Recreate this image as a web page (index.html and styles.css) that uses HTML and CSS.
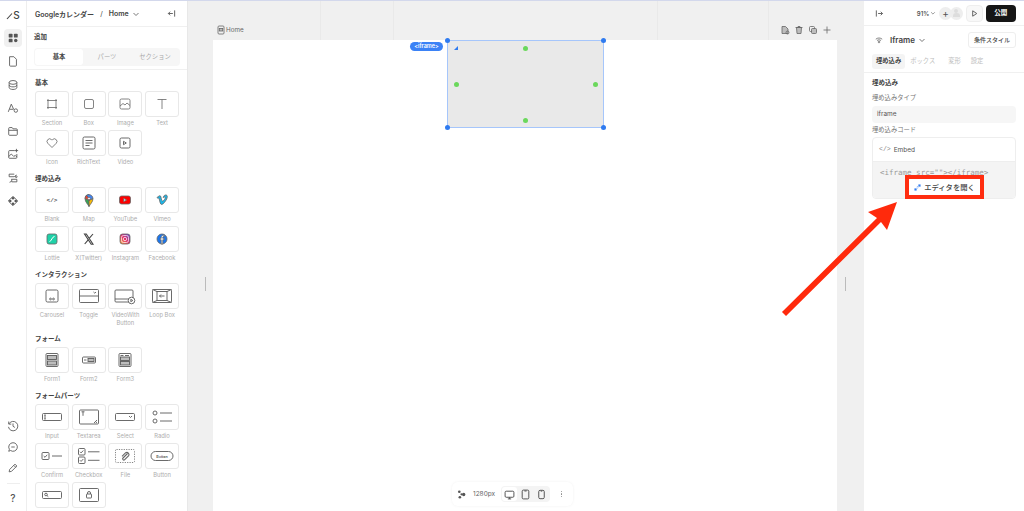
FILE: index.html
```html
<!DOCTYPE html>
<html lang="ja">
<head>
<meta charset="utf-8">
<title>Studio Editor</title>
<link rel="stylesheet" href="styles.css">
</head>
<body>
<div class="app">
  <nav class="rail">
    <div class="rail-logo"><svg class="logo" viewBox="0 0 7 10"><path d="M1 9 L6 3.500" class="bold"/></svg><span class="logo-s">S</span></div>
    <div class="rail-item active"><svg class="ri" viewBox="0 0 14 14"><g class="solid"><rect x="2" y="2" width="4.500" height="4.500" rx="1"/><rect x="8" y="2" width="4.500" height="4.500" rx="1"/><rect x="2" y="8" width="4.500" height="4" rx="1"/><circle cx="10.200" cy="10" r="2"/></g></svg></div>
    <div class="rail-item"><svg class="ri" viewBox="0 0 14 14"><path d="M3 2h5l3 3v7a1 1 0 0 1-1 1H4a1 1 0 0 1-1-1z"/></svg></div>
    <div class="rail-item"><svg class="ri" viewBox="0 0 14 14"><ellipse cx="7" cy="4" rx="4.500" ry="2.200"/><path d="M2.500 4v6c0 1.200 2 2.200 4.500 2.200s4.500-1 4.500-2.200V4M2.500 7c0 1.200 2 2.200 4.500 2.200s4.500-1 4.500-2.200"/></svg></div>
    <div class="rail-item"><svg class="ri" viewBox="0 0 14 14"><path d="M1.500 11.500 L5 2.500 L8 9M3 8.500h4"/><circle cx="10.300" cy="10" r="2"/></svg></div>
    <div class="rail-item"><svg class="ri" viewBox="0 0 14 14"><path d="M2 4a1 1 0 0 1 1-1h3l1 1.500h4a1 1 0 0 1 1 1V11a1 1 0 0 1-1 1H3a1 1 0 0 1-1-1zM2 6.200h10"/></svg></div>
    <div class="rail-item"><svg class="ri" viewBox="0 0 14 14"><path d="M9 3H3a1 1 0 0 0-1 1v7a1 1 0 0 0 1 1h7.500a1 1 0 0 0 1-1V7M2 10l3-3 3 3 1.500-1.500 2 2M11 1v4M9 3h4"/></svg></div>
    <div class="rail-item"><svg class="ri" viewBox="0 0 14 14"><path d="M2.500 2.500h6M2.500 2.500v3h6M8.500 5.500 11 3.500M5 8.500h6.500M11.500 8.500v3h-6M5.500 11.500v-3M3 12l2-1"/><circle cx="10.800" cy="5.500" r="1"/></svg></div>
    <div class="rail-item"><svg class="ri" viewBox="0 0 14 14"><path d="M7 1.500 12.500 7 7 12.500 1.500 7z"/><g class="solid"><circle cx="7" cy="3.800" r="1.500"/><circle cx="7" cy="10.200" r="1.500"/><circle cx="3.800" cy="7" r="1.500"/><circle cx="10.200" cy="7" r="1.500"/></g></svg></div>
    <div class="rail-spacer"></div>
    <div class="rail-low"><svg class="ri" viewBox="0 0 14 14"><path d="M2.300 4.500A5.500 5.500 0 1 1 1.700 8M2 1.800v3h3M7 4v3.300l2.200 1.400"/></svg></div>
    <div class="rail-low"><svg class="ri" viewBox="0 0 14 14"><path d="M7 2a5 5 0 1 1-2.800 9.100L2 12l.8-2.300A5 5 0 0 1 7 2zM5 7h4"/></svg></div>
    <div class="rail-low"><svg class="ri" viewBox="0 0 14 14"><path d="M2.500 11.500l.6-2.800L9.300 2.500l2.200 2.200L5.300 10.900zM8 4l2.200 2.200"/></svg></div>
    <div class="rail-rule"></div>
    <div class="rail-help">?</div>
  </nav>

  <aside class="left">
    <header class="left-head">
      <span class="crumb">Googleカレンダー</span><span class="crumb-sep">/</span><span class="crumb">Home</span>
      <svg class="chev" viewBox="0 0 8 8"><path d="M1.500 3l2.500 2.500L6.500 3"/></svg>
      <svg class="collapse" viewBox="0 0 10 10"><path d="M8.500 1.500v7M6.500 5H1.500M3.500 3 1.500 5l2 2"/></svg>
    </header>
    <section class="add">
      <h2 class="add-title">追加</h2>
      <div class="seg"><span class="seg-item on">基本</span><span class="seg-item">パーツ</span><span class="seg-item">セクション</span></div>
    </section>
    <div class="lib">
      <h3 class="lib-title">基本</h3>
      <div class="grid">
        <div class="cell"><div class="tile"><svg class="ti" viewBox="0 0 24 18"><path d="M8 4v10M16 4v10M7 5.500h10M7 12.500h10"/></svg></div><span class="lab">Section</span></div>
        <div class="cell"><div class="tile"><svg class="ti" viewBox="0 0 24 18"><rect x="7.500" y="4.500" width="9" height="9" rx="1.500"/></svg></div><span class="lab">Box</span></div>
        <div class="cell"><div class="tile"><svg class="ti" viewBox="0 0 24 18"><rect x="7" y="4" width="10" height="10" rx="1.500"/><path d="M7 11l3-2.500 2 1.500 2-2 3 2.500"/></svg></div><span class="lab">Image</span></div>
        <div class="cell"><div class="tile"><svg class="ti" viewBox="0 0 24 18"><path d="M7.500 4.500h9M12 4.500V14"/></svg></div><span class="lab">Text</span></div>
        <div class="cell"><div class="tile"><svg class="ti" viewBox="0 0 24 18"><path d="M12 13.500 7.800 9.300a2.600 2.600 0 0 1 3.700-3.700l.5.500.5-.5a2.600 2.600 0 0 1 3.700 3.700z"/></svg></div><span class="lab">Icon</span></div>
        <div class="cell"><div class="tile"><svg class="ti strong" viewBox="0 0 24 18"><rect x="6" y="3" width="12" height="12" rx="1.500"/><path d="M8.500 6.500h7M8.500 9h7M8.500 11.500h4"/></svg></div><span class="lab">RichText</span></div>
        <div class="cell"><div class="tile"><svg class="ti strong" viewBox="0 0 24 18"><rect x="7" y="4" width="10" height="10" rx="1.500"/><path d="M10.500 7.300v3.400l2.800-1.700z"/></svg></div><span class="lab">Video</span></div>
      </div>

      <h3 class="lib-title">埋め込み</h3>
      <div class="grid">
        <div class="cell"><div class="tile"><span class="code-mark">&lt;/&gt;</span></div><span class="lab">Blank</span></div>
        <div class="cell"><div class="tile"><svg class="ti brand" viewBox="0 0 24 18"><path d="M12 15.500c-1-2.200-4-4.500-4-8a4 4 0 0 1 4-4z" fill="#34a853"/><path d="M12 15.500c1-2.200 4-4.500 4-8l-4 2z" fill="#fbbc04"/><path d="M8 7.500a4 4 0 0 1 1.500-3l4 4-1.500 1z" fill="#ea4335"/><path d="M9.500 4.500A4 4 0 0 1 16 7.500l-2.500 1z" fill="#4285f4"/><circle cx="12" cy="7.500" r="1.300" fill="#fff"/></svg></div><span class="lab">Map</span></div>
        <div class="cell"><div class="tile"><svg class="ti brand" viewBox="0 0 24 18"><rect x="6.500" y="5" width="11" height="8" rx="2" fill="#f00"/><path d="M10.800 7.300v3.400l2.800-1.700z" fill="#fff"/></svg></div><span class="lab">YouTube</span></div>
        <div class="cell"><div class="tile"><svg class="ti brand" viewBox="0 0 24 18"><path d="M7 6.500c1.500-1 2.700-2.500 3.500-1.500s.8 5 2 5 3-2.500 2.700-3.500-1.700-.3-2 .2c.3-2.200 1.800-2.900 3-2.700s1.500 2 .5 4c-1 2-3.500 5.500-5 5.500s-1.800-3-2.500-5.500c-.4-1.300-1-1-1.500-.7z" fill="#1ab7ea"/></svg></div><span class="lab">Vimeo</span></div>
        <div class="cell"><div class="tile"><svg class="ti brand" viewBox="0 0 24 18"><rect x="7" y="4" width="10" height="10" rx="2" fill="#1fd1a8"/><path d="M9.500 11.500c2 0 2.500-5 5-5" stroke="#fff" fill="none" stroke-width="1"/></svg></div><span class="lab">Lottie</span></div>
        <div class="cell"><div class="tile"><svg class="ti brand" viewBox="0 0 24 18"><path d="M7.500 4h1.800l6.700 10.200h-1.800z" fill="none" stroke="#444" stroke-width="1.100"/><path d="M16 4l-3.600 4.200M11.400 9.600 7.700 14" stroke="#444" stroke-width="1.100"/></svg></div><span class="lab">X(Twitter)</span></div>
        <div class="cell"><div class="tile"><svg class="ti brand" viewBox="0 0 24 18"><defs><linearGradient id="ig" x1="0" y1="1" x2="1" y2="0"><stop offset="0" stop-color="#fdb03d"/><stop offset=".5" stop-color="#e1306c"/><stop offset="1" stop-color="#5b51d8"/></linearGradient></defs><rect x="7" y="4" width="10" height="10" rx="2.500" fill="url(#ig)"/><rect x="8.500" y="5.500" width="7" height="7" rx="2" fill="none" stroke="#fff" stroke-width=".7"/><circle cx="12" cy="9" r="1.700" fill="none" stroke="#fff" stroke-width=".7"/></svg></div><span class="lab">Instagram</span></div>
        <div class="cell"><div class="tile"><svg class="ti brand" viewBox="0 0 24 18"><circle cx="12" cy="9" r="5" fill="#1877f2"/><path d="M12.800 14V9.800h1.300l.2-1.500h-1.500v-.9c0-.5.200-.8.800-.8h.8V5.300h-1.200c-1.300 0-2 .8-2 2v1h-1.200v1.500h1.200V14z" fill="#fff"/></svg></div><span class="lab">Facebook</span></div>
      </div>

      <h3 class="lib-title">インタラクション</h3>
      <div class="grid">
        <div class="cell"><div class="tile"><svg class="ti strong" viewBox="0 0 24 18"><rect x="6" y="3" width="12" height="12" rx="1.500"/><circle cx="10.500" cy="12" r=".9"/><circle cx="13.500" cy="12" r=".9"/></svg></div><span class="lab">Carousel</span></div>
        <div class="cell"><div class="tile"><svg class="ti strong" viewBox="0 0 24 18"><rect x="2.500" y="2.500" width="19" height="13" rx="1"/><path d="M2.500 9h19M16.500 5l1.300 1.200L19 5"/></svg></div><span class="lab">Toggle</span></div>
        <div class="cell two"><div class="tile"><svg class="ti strong" viewBox="0 0 24 18"><rect x="2" y="3" width="18" height="12" rx="1"/><path d="M2 12h14"/><circle cx="18.500" cy="13.500" r="3.300" class="fillw"/><path d="M17.800 12.300v2.400l2-1.200z"/></svg></div><span class="lab">VideoWith<br>Button</span></div>
        <div class="cell"><div class="tile"><svg class="ti strong" viewBox="0 0 24 18"><rect x="2.500" y="2.500" width="19" height="13" rx="1"/><rect x="7" y="4.500" width="10" height="9"/><path d="M2.500 2.500 7 4.500M2.500 15.500 7 13.500M21.500 2.500 17 4.500M21.500 15.500 17 13.500M14.500 9h-5M11 7.500 9.500 9l1.500 1.500"/></svg></div><span class="lab">Loop Box</span></div>
      </div>

      <h3 class="lib-title">フォーム</h3>
      <div class="grid">
        <div class="cell"><div class="tile"><svg class="ti strong" viewBox="0 0 24 18"><rect x="6" y="2.500" width="12" height="13" rx="1"/><rect x="7.500" y="4.500" width="9" height="4" class="fillg"/><rect x="7.500" y="10" width="9" height="4" class="fillg"/></svg></div><span class="lab">Form1</span></div>
        <div class="cell"><div class="tile"><svg class="ti strong" viewBox="0 0 24 18"><rect x="5.500" y="6" width="13" height="6" rx="1"/><rect x="11" y="7.500" width="6" height="3" class="fillg"/><path d="M7 9h2.500"/></svg></div><span class="lab">Form2</span></div>
        <div class="cell"><div class="tile"><svg class="ti strong" viewBox="0 0 24 18"><rect x="6" y="2.500" width="12" height="13" rx="1"/><path d="M7.500 4.500h3M12 4.500h4"/><rect x="7.500" y="6" width="9" height="3.500" class="fillg"/><rect x="7.500" y="10.500" width="9" height="3.500" class="fillg"/></svg></div><span class="lab">Form3</span></div>
      </div>

      <h3 class="lib-title">フォームパーツ</h3>
      <div class="grid">
        <div class="cell"><div class="tile"><svg class="ti strong" viewBox="0 0 24 18"><rect x="2.500" y="5.500" width="19" height="7" rx="1"/><path d="M5 7v4M4.300 7h1.400M4.300 11h1.400"/></svg></div><span class="lab">Input</span></div>
        <div class="cell"><div class="tile"><svg class="ti strong" viewBox="0 0 24 18"><rect x="2.500" y="2" width="19" height="14" rx="1"/><path d="M4.500 3.800h3M6 3.800v4M20 12l-3 3M20 14 18.800 15"/></svg></div><span class="lab">Textarea</span></div>
        <div class="cell"><div class="tile"><svg class="ti strong" viewBox="0 0 24 18"><rect x="2.500" y="5.500" width="19" height="7" rx="1"/><path d="M16 8l1.500 1.500L19 8"/></svg></div><span class="lab">Select</span></div>
        <div class="cell"><div class="tile"><svg class="ti strong" viewBox="0 0 24 18"><circle cx="5" cy="5" r="2"/><circle cx="5" cy="13" r="2"/><path d="M10 5h12M10 13h12"/></svg></div><span class="lab">Radio</span></div>
        <div class="cell"><div class="tile"><svg class="ti strong" viewBox="0 0 24 18"><rect x="2" y="5.500" width="7" height="7" rx="1"/><path d="M3.700 9l1.300 1.300L7.200 7.800M12 9h10"/></svg></div><span class="lab">Confirm</span></div>
        <div class="cell"><div class="tile"><svg class="ti strong" viewBox="0 0 24 18"><rect x="1.500" y="1.500" width="6.500" height="6.500" rx="1"/><rect x="1.500" y="10" width="6.500" height="6.500" rx="1"/><path d="M3 4.800l1.100 1.100L6.300 3.500M3 13.300l1.100 1.100L6.300 12M11 4.800h11.500M11 13.300h11.500"/></svg></div><span class="lab">Checkbox</span></div>
        <div class="cell"><div class="tile"><svg class="ti" viewBox="0 0 24 18"><rect x="2.500" y="2.500" width="19" height="13" rx="1" stroke-dasharray="1.200 1.200"/><path class="thick" d="M14.500 6.500 10 11a1.200 1.200 0 0 0 1.700 1.700l4-4a2.200 2.200 0 0 0-3-3L9 9.300"/></svg></div><span class="lab">File</span></div>
        <div class="cell"><div class="tile"><svg class="ti strong" viewBox="0 0 24 18"><rect x="1" y="4.500" width="22" height="9" rx="4.500"/><text x="12" y="10.700" class="btn-mini">Button</text></svg></div><span class="lab">Button</span></div>
        <div class="cell"><div class="tile"><svg class="ti strong" viewBox="0 0 24 18"><rect x="2.500" y="5.500" width="19" height="7" rx="1"/><circle cx="6" cy="8.500" r="1.300"/><path d="M7 9.500l1.300 1.200"/></svg></div></div>
        <div class="cell"><div class="tile"><svg class="ti strong" viewBox="0 0 24 18"><rect x="2.500" y="2.500" width="19" height="13" rx="1"/><rect x="9.500" y="8" width="5" height="4" rx=".5"/><path d="M10.500 8V7a1.500 1.500 0 0 1 3 0v1"/></svg></div></div>
      </div>
    </div>
  </aside>

  <main class="stage">
    <div class="stage-head">
      <div class="page-name"><svg class="si" viewBox="0 0 10 10"><rect x="2" y="1" width="6" height="8" rx="1"/><rect x="3.300" y="3.500" width="3.400" height="2.500" class="fillg"/></svg><span>Home</span></div>
      <div class="page-tools">
        <svg class="si" viewBox="0 0 10 10"><path d="M2 1.500h3.500L8 4v4.500H2z" class="fillg"/><circle cx="7.500" cy="7.500" r="1.500"/></svg>
        <svg class="si" viewBox="0 0 10 10"><path d="M1.500 2.500h7M4 2.500V1.500h2v1M2.500 2.500l.5 6h4l.5-6z" class="fillg"/></svg>
        <svg class="si" viewBox="0 0 10 10"><rect x="1.500" y="1.500" width="5" height="5" rx="1"/><rect x="3.500" y="3.500" width="5" height="5" rx="1" class="fillg"/></svg>
        <svg class="si" viewBox="0 0 10 10"><path d="M5 1.500v7M1.500 5h7"/></svg>
      </div>
    </div>
    <div class="artboard">
      <div class="frame">
        <span class="frame-tag">&lt;iframe&gt;</span>
        <span class="h tl"></span><span class="h tr"></span><span class="h bl"></span><span class="h br"></span>
        <span class="g gt"></span><span class="g gl"></span><span class="g gr"></span><span class="g gb"></span>
        <svg class="frame-mark" viewBox="0 0 6 6"><path d="M5 1v4H1z"/></svg>
      </div>
    </div>
    <span class="grip grip-l"></span><span class="grip grip-r"></span>
    <span class="vl v1"></span><span class="vl v2"></span><span class="vl v3"></span><span class="vl v4"></span>
    <div class="dock">
      <svg class="si dk" viewBox="0 0 10 10"><g class="solid"><circle cx="3" cy="2.500" r="1.200"/><circle cx="7" cy="5" r="1.500"/><circle cx="3.500" cy="7.500" r="1.200"/><circle cx="5" cy="4.800" r="1"/></g></svg>
      <span class="dock-size">1280px</span>
      <div class="dock-group">
        <span class="dock-btn on"><svg class="si dk" viewBox="0 0 10 10"><rect x="1" y="2" width="8" height="5.500" rx="1"/><path d="M3.500 9h3M5 7.500V9"/></svg></span>
        <span class="dock-btn"><svg class="si dk" viewBox="0 0 10 10"><rect x="2" y="1" width="6" height="8" rx="1"/><path d="M4 1.800h2"/></svg></span>
        <span class="dock-btn"><svg class="si dk" viewBox="0 0 10 10"><rect x="2.500" y="1.200" width="5" height="7.600" rx="1.200"/><path d="M4.300 1.900h1.400"/></svg></span>
      </div>
      <span class="dock-more"><i></i><i></i><i></i></span>
    </div>
  </main>

  <aside class="right">
    <div class="r-top">
      <svg class="r-expand" viewBox="0 0 10 10"><path d="M1.500 1.500v7M3.500 5h5M6.500 3l2 2-2 2"/></svg>
      <span class="zoom-val">91%</span><svg class="chev small" viewBox="0 0 8 8"><path d="M1.500 3l2.500 2.500L6.500 3"/></svg>
      <span class="plus">+</span><span class="avatar"><i></i><b></b></span>
      <span class="play"><svg viewBox="0 0 10 10"><path d="M3 2v6l4.500-3z"/></svg></span>
      <span class="publish">公開</span>
    </div>
    <div class="r-el">
      <svg class="wifi" viewBox="0 0 10 10"><path d="M1 4c2.300-2 5.700-2 8 0M2.500 5.700c1.500-1.200 3.500-1.200 5 0"/><circle cx="5" cy="7.500" r="1"/></svg>
      <span class="el-name">Iframe</span>
      <svg class="chev" viewBox="0 0 8 8"><path d="M1.500 3l2.500 2.500L6.500 3"/></svg>
      <span class="cond">条件スタイル</span>
    </div>
    <div class="r-tabs"><span class="rtab on">埋め込み</span><span class="rtab">ボックス</span><span class="rtab">変形</span><span class="rtab">設定</span></div>
    <div class="r-body">
      <h3 class="r-h">埋め込み</h3>
      <div class="r-lab">埋め込みタイプ</div>
      <div class="r-input">iframe</div>
      <div class="r-lab tight">埋め込みコード</div>
      <div class="embed">
        <div class="embed-head"><span class="embed-code">&lt;/&gt;</span><span>Embed</span></div>
        <div class="embed-body"><code class="code">&lt;iframe src=""&gt;&lt;/iframe&gt;</code></div>
        <div class="open"><svg class="open-i" viewBox="0 0 8 8"><rect x="5" y="0.500" width="2.500" height="2.500"/><rect x="0.500" y="5" width="2.500" height="2.500"/><path d="M3 3.500l1.500-1M3.500 5 5 4"/></svg><span>エディタを開く</span></div>
      </div>
    </div>
  </aside>

  <svg class="arrow" viewBox="0 0 1024 511"><path d="M786 316 L881 222 L887 230 L897 202 L868 212 L877 218 L782 312 Z"/></svg>
</div>
</body>
</html>
```
FILE: styles.css
```css
* { box-sizing: border-box; }
html, body { margin: 0; height: 100%; overflow: hidden; background: #fff; }
body { font-family: "Inter", "Noto Sans CJK JP", sans-serif; color: #333; }
h2, h3 { margin: 0; }
svg { display: block; fill: none; stroke: #555; stroke-width: 1; }
svg .solid { fill: #555; stroke: none; }

.app { position: relative; display: flex; width: 1024px; height: 511px; border-top: 1px solid #d3d8ec; overflow: hidden; }

.rail { width: 27px; flex: none; display: flex; flex-direction: column; align-items: center; border-right: 1px solid #eeeeee; padding-top: 5px; }
.rail-logo { height: 18px; margin-bottom: 5px; display: flex; align-items: center; }
.logo { width: 7px; height: 10px; }
.rail .ri { width: 12px; height: 12px; }
.logo .bold { stroke: #444; stroke-width: 1.100; }
.logo-s { font-size: 10px; font-weight: 500; line-height: 12px; color: #444; }
.rail-item { width: 18px; height: 18px; flex: none; margin-bottom: 5.300px; border-radius: 4px; display: flex; align-items: center; justify-content: center; }
.rail-item.active { background: #f0f0f0; }
.rail-spacer { flex: 1; }
.rail-low { height: 14px; margin-bottom: 7px; display: flex; align-items: center; }
.rail-rule { width: 13px; border-top: 1px solid #eee; margin: 1px 0 7px; }
.rail-help { font-size: 10px; font-weight: 500; color: #555; height: 20px; line-height: 14px; }

.left { width: 160px; flex: none; display: flex; flex-direction: column; background: #fff; overflow: hidden; }
.left-head { height: 26px; flex: none; display: flex; align-items: center; padding: 0 11px 0 8px; border-bottom: 1px solid #f0f0f0; font-size: 7px; font-weight: 600; color: #444; }
.crumb-sep { margin: 0 6px; font-weight: 400; }
.chev { width: 8px; height: 8px; margin-left: 3px; stroke-width: .8; }
.collapse { width: 9px; height: 9px; margin-left: auto; }
.add { height: 43px; flex: none; padding: 5px 7px 0; border-bottom: 1px solid #f0f0f0; }
.add-title { font-size: 6.500px; font-weight: 600; line-height: 10px; color: #444; }
.seg { margin-top: 6px; height: 18px; display: flex; align-items: center; background: #f6f6f6; border-radius: 4px; padding: 1px; }
.seg-item { flex: 1; text-align: center; font-size: 6.300px; color: #aaa; line-height: 16px; }
.seg-item.on { background: #fff; color: #444; font-weight: 600; border-radius: 3px; }
.lib { padding: 8px 0 0 8px; }
.lib-title { font-size: 6.500px; font-weight: 600; color: #444; line-height: 10px; margin: 5px 0 3px; }
.lib-title:first-child { margin-top: 0; }
.grid { display: grid; grid-template-columns: repeat(4, 34px); column-gap: 2.700px; }
.cell { height: 39px; display: flex; flex-direction: column; align-items: center; }
.cell.two { height: 46px; }
.tile { width: 34px; height: 26px; flex: none; border: 1px solid #e8e8e8; border-radius: 3px; display: flex; align-items: center; justify-content: center; }
.ti { width: 24px; height: 18px; stroke: #666; stroke-width: .8; }
.ti.strong { stroke: #5a5a5a; stroke-width: .9; }
.ti .thick { stroke-width: 1.100; }
.fillw { fill: #fff; }
.fillg { fill: #bdbdbd; }
.btn-mini { font-size: 3.600px; text-anchor: middle; stroke: none; fill: #555; font-weight: 600; font-family: "Inter", sans-serif; }
.code-mark { font-size: 6px; color: #555; font-family: "Liberation Mono", monospace; font-weight: 700; }
.lab { margin-top: 2px; font-size: 5.800px; line-height: 8px; color: #adadad; text-align: center; white-space: nowrap; }

.stage { position: relative; flex: 1; min-width: 0; background: #f0f0f0; display: flex; flex-direction: column; padding: 0 27px 0 25px; border-left: 1px solid #e8e8e8; }
.stage-head { height: 39px; flex: none; display: flex; align-items: flex-end; justify-content: space-between; padding: 0 5px 5px 3px; }
.si { width: 10px; height: 10px; stroke: #666; stroke-width: .8; flex: none; }
.si.dk { width: 11px; height: 11px; stroke: #555; stroke-width: .9; }
.page-name { display: flex; align-items: center; gap: 0; font-size: 6.300px; color: #666; }
.page-tools { display: flex; gap: 4px; }
.artboard { flex: 1; background: #fff; position: relative; }
.frame { position: relative; margin: 0 0 0 234px; width: 157px; height: 88px; background: #e9e9e9; border: 1px solid #a6c6fb; }
.frame-tag { position: absolute; left: -38px; top: 1px; width: 33px; height: 9px; border-radius: 5px; background: #3b82f6; color: #fff; font-size: 5.500px; font-weight: 600; line-height: 9px; text-align: center; }
.h { position: absolute; width: 5px; height: 5px; border-radius: 50%; background: #2f7bf0; }
.tl { left: -3px; top: -3px; } .tr { right: -3px; top: -3px; } .bl { left: -3px; bottom: -3px; } .br { right: -3px; bottom: -3px; }
.g { position: absolute; width: 5px; height: 5px; border-radius: 50%; background: #6bd85c; }
.gt { left: 75px; top: 5px; } .gb { left: 75px; bottom: 4px; } .gl { left: 6px; top: 41px; } .gr { right: 5px; top: 41px; }
.frame-mark { position: absolute; left: 5px; top: 4px; width: 6px; height: 6px; }
.frame-mark path { fill: #2f7bf0; stroke: none; }
.grip { position: absolute; top: 276px; height: 14px; width: 1px; background: #bbb; }
.grip-l { left: 17px; } .grip-r { right: 18px; }
.vl { position: absolute; top: 0; height: 39px; width: 1px; background: #e9e9e9; }
.v1 { left: 132px; } .v2 { left: 205px; } .v3 { left: 469px; } .v4 { left: 580px; }
.dock { position: absolute; left: 264px; top: 481px; width: 121px; height: 24px; background: #fff; border-radius: 6px; box-shadow: 0 0 3px rgba(0,0,0,.06); display: flex; align-items: center; padding: 0 5px 0 4px; }
.dock-size { font-size: 6.500px; color: #666; margin-left: 6px; }
.dock-group { display: flex; margin-left: 6px; height: 16px; padding: 1px; background: #f4f4f4; border-radius: 4px; gap: 1px; }
.dock-btn { width: 15px; display: flex; align-items: center; justify-content: center; border-radius: 3px; }
.dock-btn.on { background: #fff; }
.dock-more { margin-left: auto; margin-right: 6px; display: flex; flex-direction: column; gap: 1px; }
.dock-more i { display: block; width: 1.500px; height: 1.500px; border-radius: 50%; background: #888; }

.right { width: 160px; flex: none; background: #fff; display: flex; flex-direction: column; }
.r-top { height: 25px; flex: none; display: flex; align-items: center; padding: 0 8px 0 11px; border-bottom: 1px solid #f0f0f0; }
.r-expand { width: 9px; height: 9px; }
.zoom-val { margin-left: 33px; font-size: 6px; font-weight: 600; color: #555; }
.chev.small { width: 6px; height: 6px; margin-left: 1px; }
.plus { margin-left: 3px; width: 13px; height: 13px; border-radius: 50%; background: #eee; text-align: center; font-size: 10px; line-height: 12px; color: #555; }
.avatar { width: 13px; height: 13px; border-radius: 50%; background: #eee; margin-left: -2px; display: flex; flex-direction: column; align-items: center; padding-top: 2px; gap: .5px; }
.avatar i { width: 4px; height: 4px; border-radius: 50%; background: #ddd; }
.avatar b { width: 7px; height: 4px; border-radius: 3px 3px 0 0; background: #ddd; }
.play { margin-left: 3px; width: 17px; height: 17px; border: 1px solid #eee; border-radius: 4px; background: #f8f8f8; display: flex; align-items: center; justify-content: center; }
.play svg { width: 9px; height: 9px; }
.publish { margin-left: 3px; width: 31px; height: 17px; border-radius: 4px; background: #161616; color: #fff; font-size: 6.500px; font-weight: 600; text-align: center; line-height: 17px; }
.r-el { height: 27px; flex: none; display: flex; align-items: center; padding: 0 8px 0 11px; }
.wifi { width: 8px; height: 8px; stroke-width: .9; }
.el-name { margin-left: 7px; font-size: 8px; font-weight: 600; color: #444; }
.cond { margin-left: auto; width: 48px; height: 16px; border: 1px solid #eee; border-radius: 3px; font-size: 6px; font-weight: 500; line-height: 14px; text-align: center; color: #444; }
.r-tabs { height: 20px; flex: none; display: flex; align-items: flex-start; padding: 1px 0 0 8px; border-bottom: 1px solid #f0f0f0; font-size: 6.300px; }
.rtab { color: #bdbdbd; padding: 0 4px; line-height: 15px; margin-right: 1px; }
.rtab:nth-child(3) { margin-left: 4px; margin-right: 1px; }
.rtab:nth-child(4) { margin-left: 1px; }
.rtab.on { background: #f4f4f4; border-radius: 3px; color: #444; font-weight: 600; }
.r-body { padding: 5px 8px 0; }
.r-h { font-size: 6.500px; font-weight: 600; color: #444; line-height: 10px; }
.r-lab { font-size: 6.300px; color: #777; line-height: 10px; margin-top: 5px; }
.r-lab.tight { margin-top: 2px; }
.r-input { margin-top: 3px; height: 17px; border-radius: 4px; background: #f6f6f6; font-size: 6.500px; line-height: 17px; padding: 0 5px; color: #555; }
.embed { position: relative; margin-top: 2px; height: 62px; border: 1px solid #eee; border-radius: 4px; overflow: visible; }
.embed-head { height: 24px; display: flex; align-items: center; gap: 3px; padding-left: 6px; font-size: 6.500px; color: #555; border-bottom: 1px solid #eee; }
.embed-code { font-family: "Liberation Mono", monospace; color: #888; font-size: 6.500px; }
.embed-body { height: 36px; background: #f4f4f4; border-radius: 0 0 3px 3px; padding: 5px 7px 0; line-height: 12px; }
.code { display: block; font-family: "DejaVu Sans Mono", monospace; font-size: 7.500px; line-height: 12px; color: #999; white-space: nowrap; }
.open { position: absolute; left: 32px; top: 37px; width: 79px; height: 24px; border: 4px solid #ff2d10; background: #fff; display: flex; align-items: center; justify-content: center; gap: 3px; font-size: 7.300px; font-weight: 500; color: #444; }
.open-i { width: 7px; height: 7px; stroke: #3b82f6; stroke-width: .6; }
.open-i rect { fill: #2f7bf0; stroke: none; }

.arrow { position: absolute; left: 0; top: -1px; width: 1024px; height: 511px; pointer-events: none; }
.arrow path { fill: #ff2a0c; stroke: none; }
```
